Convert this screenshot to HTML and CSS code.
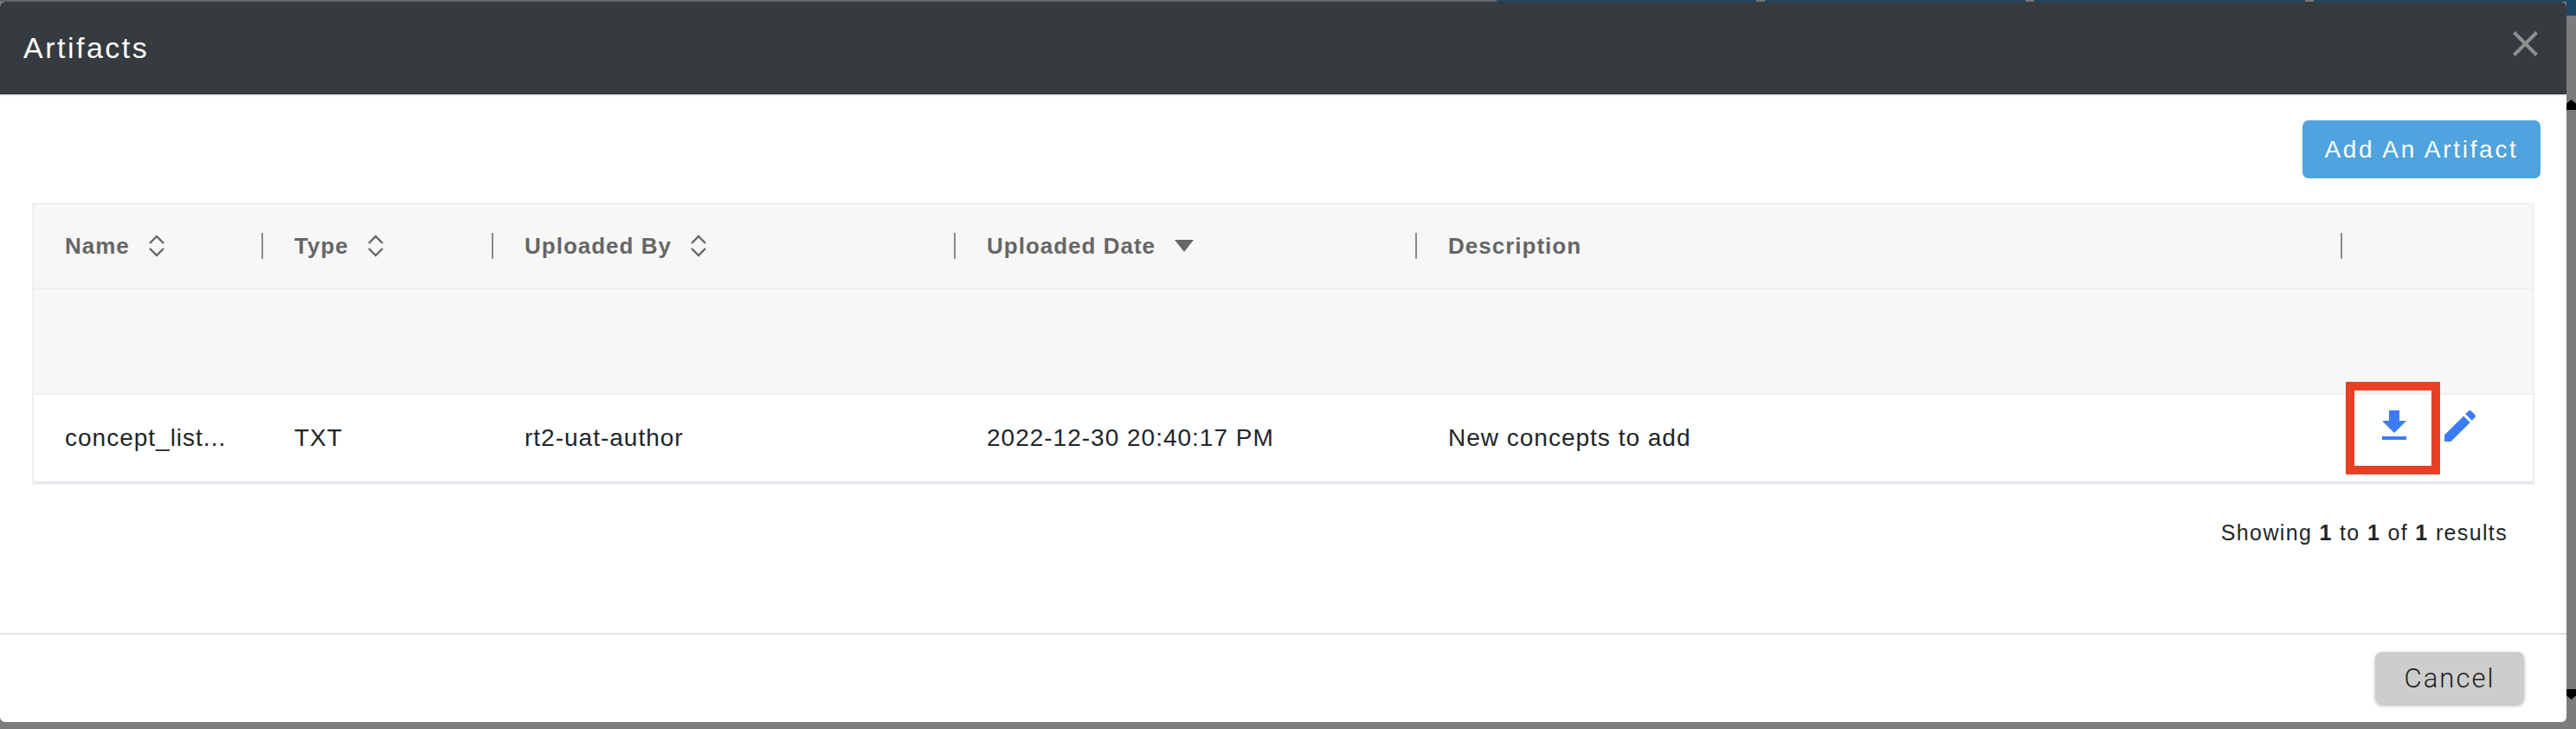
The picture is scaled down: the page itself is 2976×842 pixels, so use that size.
FILE: index.html
```html
<!DOCTYPE html>
<html lang="en">
<head>
<meta charset="utf-8">
<title>Artifacts</title>
<link rel="stylesheet" href="styles.css">
</head>
<body>
<div class="backdrop-strip">
  <span class="strip strip-a"></span>
  <span class="strip strip-b"></span>
  <span class="strip strip-gap"></span>
  <span class="strip strip-c"></span>
  <span class="strip strip-gap"></span>
  <span class="strip strip-d"></span>
  <span class="strip strip-gap"></span>
  <span class="strip strip-e"></span>
</div>
<div class="stage">
  <section class="modal">
    <header class="modal-header">
      <h1 class="modal-title">Artifacts</h1>
      <svg class="close" viewBox="0 0 29 29" aria-label="Close"><path d="M1.5 1.5l26 26M27.5 1.5l-26 26"/></svg>
    </header>
    <div class="modal-body">
      <div class="toolbar"><button class="btn-add">Add An Artifact</button></div>
      <div class="table">
        <div class="row row-head">
          <div class="th"><span class="th-label">Name<svg class="sort" viewBox="0 0 20 26"><path d="M2 10l8-8 8 8M2 16l8 8 8-8"/></svg></span><i class="divider"></i></div>
          <div class="th"><span class="th-label">Type<svg class="sort" viewBox="0 0 20 26"><path d="M2 10l8-8 8 8M2 16l8 8 8-8"/></svg></span><i class="divider"></i></div>
          <div class="th"><span class="th-label">Uploaded By<svg class="sort" viewBox="0 0 20 26"><path d="M2 10l8-8 8 8M2 16l8 8 8-8"/></svg></span><i class="divider"></i></div>
          <div class="th"><span class="th-label">Uploaded Date<svg class="sort-down" viewBox="0 0 22 14"><path d="M0 0h22L11 14z"/></svg></span><i class="divider"></i></div>
          <div class="th"><span class="th-label">Description</span><i class="divider"></i></div>
          <div class="th"></div>
        </div>
        <div class="row-filter"></div>
        <div class="row row-data">
          <div class="td">concept_list...</div>
          <div class="td">TXT</div>
          <div class="td">rt2-uat-author</div>
          <div class="td">2022-12-30 20:40:17 PM</div>
          <div class="td">New concepts to add</div>
          <div class="td-actions">
            <span class="highlight"></span>
            <svg class="icon" viewBox="0 0 24 24"><path d="M19 9h-4V3H9v6H5l7 7 7-7zM5 18v2h14v-2H5z"/></svg>
            <svg class="icon" viewBox="0 0 24 24"><path d="M3 17.25V21h3.75L17.81 9.94l-3.75-3.75L3 17.25zM20.71 7.04c.39-.39.39-1.02 0-1.41l-2.34-2.34c-.39-.39-1.02-.39-1.41 0l-1.83 1.83 3.75 3.75 1.83-1.83z"/></svg>
          </div>
        </div>
      </div>
      <p class="results">Showing <b>1</b> to <b>1</b> of <b>1</b> results</p>
    </div>
    <footer class="modal-footer"><button class="btn-cancel">Cancel</button></footer>
  </section>
  <aside class="backdrop-side">
    <div class="side-top"></div>
    <div class="side-rest">
      <span class="arrow-up"></span>
      <span class="arrow-down"></span>
    </div>
  </aside>
</div>
</body>
</html>
```
FILE: styles.css
```css
* { box-sizing: border-box; }
html, body { margin: 0; padding: 0; }
body {
  width: 2976px;
  height: 842px;
  overflow: hidden;
  background: #7c7c7c;
  font-family: "Liberation Sans", Arial, sans-serif;
  color: #212529;
}
.backdrop-strip { display: flex; height: 2px; }
.strip { display: block; height: 2px; }
.strip-a { width: 1729px; background: #666; }
.strip-b { width: 300px; background: #1c4866; }
.strip-gap { width: 10px; background: #777; }
.strip-c { width: 301px; background: #1c4866; }
.strip-d { width: 313px; background: #1c4866; }
.strip-e { flex: 1; background: #1c4866; }

.stage { display: flex; height: 840px; }
.modal {
  width: 2965px;
  height: 832px;
  display: flex;
  flex-direction: column;
  background: #fff;
  border-radius: 6px;
  overflow: hidden;
}
.modal-header {
  flex: none;
  display: flex;
  align-items: flex-start;
  justify-content: space-between;
  background: #363b3f;
  border-bottom: 2px solid #e9ecef;
  height: 109px;
  padding: 34px 33px 0 27px;
}
.modal-title {
  margin: 0;
  font-size: 34px;
  line-height: 38px;
  font-weight: 400;
  letter-spacing: 2.5px;
  color: #fff;
}
.close { width: 29px; height: 29px; fill: none; stroke: #8f8f8f; stroke-width: 4; }

.modal-body { flex: 1; display: flex; flex-direction: column; }
.toolbar { display: flex; justify-content: flex-end; padding: 28px 30px 28px 0; }
.btn-add {
  width: 275px;
  height: 67px;
  padding: 0;
  border: 0;
  border-radius: 7px;
  background: #4fa3de;
  color: #fff;
  font: 400 28px "Liberation Sans", Arial, sans-serif;
  letter-spacing: 2.7px;
}
.table {
  margin: 0 37px;
  border: 2px solid #f0f0f0;
  background: #f7f7f7;
}
.row {
  display: grid;
  grid-template-columns: 265px 266px 534px 533px 1069px 1fr;
}
.row-head { height: 98px; border-bottom: 2px solid #f0f0f0; }
.th {
  display: flex;
  align-items: center;
  justify-content: space-between;
  padding: 0 0 0 36px;
}
.th-label {
  display: flex;
  align-items: center;
  font-size: 26px;
  font-weight: 700;
  letter-spacing: 1px;
  color: #666;
}
.divider { display: block; width: 2px; height: 30px; background: #8a8a8a; }
.sort { width: 20px; height: 26px; margin-left: 21px; fill: none; stroke: #666; stroke-width: 2.4; }
.sort-down { width: 22px; height: 14px; margin-left: 22px; fill: #666; }
.row-filter { height: 122px; border-bottom: 2px solid #f0f0f0; }
.row-data {
  height: 102px;
  background: #fff;
  border-bottom: 2px solid #e2e5ef;
}
.td {
  display: flex;
  align-items: center;
  padding-left: 36px;
  font-size: 28px;
  letter-spacing: 1px;
}
.td-actions {
  position: relative;
  display: flex;
  align-items: flex-start;
  gap: 28px;
  padding: 12px 0 0 36px;
}
.icon { width: 48px; height: 48px; flex: none; fill: #3b7cf6; }
.highlight {
  position: absolute;
  left: 4px;
  top: -15px;
  width: 109px;
  height: 107px;
  border: 10px solid #e94025;
}
.results {
  margin: 40px 68px 0 0;
  text-align: right;
  font-size: 25px;
  line-height: 30px;
  letter-spacing: 1.35px;
}
.modal-footer {
  height: 103px;
  flex: none;
  display: flex;
  justify-content: flex-end;
  padding: 20px 49px 0 0;
  border-top: 2px solid #dee2e6;
}
.btn-cancel {
  width: 172px;
  height: 60px;
  padding: 0;
  border: 0;
  border-radius: 8px;
  background: #cdcdcd;
  box-shadow: 0 2px 4px rgba(0,0,0,.3);
  color: #222;
  font: 300 31px Roboto, "Liberation Sans", sans-serif;
  letter-spacing: 2px;
}
.backdrop-side { flex: 1; display: flex; flex-direction: column; }
.side-top { height: 16px; background: #1c4866; }
.side-rest {
  height: 790px;
  display: flex;
  flex-direction: column;
  justify-content: space-between;
  padding-top: 97px;
}
.arrow-up, .arrow-down {
  display: block;
  width: 11px;
  height: 12px;
  background: #000;
}
.arrow-up { clip-path: polygon(50% 0, 100% 40%, 100% 100%, 0 100%, 0 40%); }
.arrow-down { clip-path: polygon(0 0, 100% 0, 100% 60%, 50% 100%, 0 60%); }
```
